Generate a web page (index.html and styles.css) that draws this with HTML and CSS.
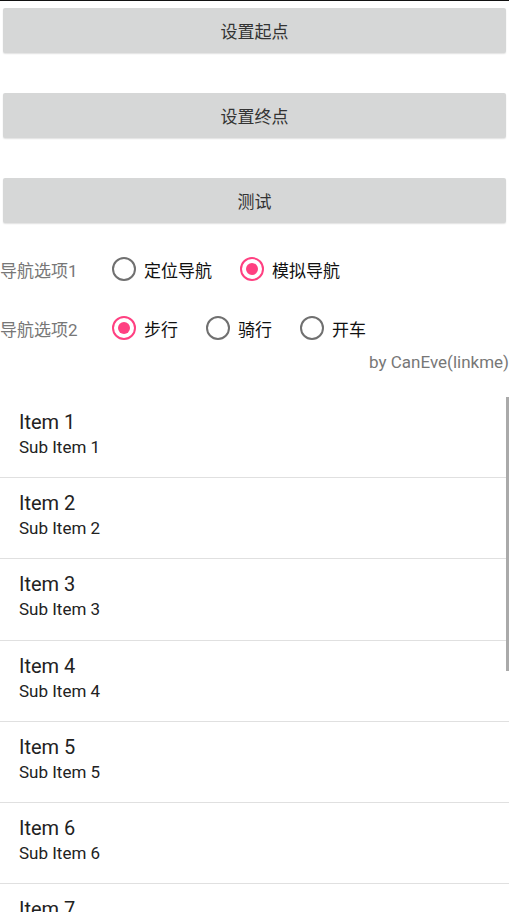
FILE: index.html
```html
<!DOCTYPE html>
<html lang="zh-CN">
<head>
  <meta charset="UTF-8">
  <meta name="viewport" content="width=device-width, initial-scale=1.0">
  <title>导航测试</title>
  <link rel="stylesheet" href="styles.css">
</head>
<body>
  <div class="top-line"></div>

  <div class="buttons">
    <button class="btn">设置起点</button>
    <button class="btn">设置终点</button>
    <button class="btn">测试</button>
  </div>

  <div class="options">
    <div class="option-row">
      <span class="option-label">导航选项1</span>
      <label class="radio"><span class="dot"></span><span>定位导航</span></label>
      <label class="radio checked"><span class="dot"></span><span>模拟导航</span></label>
    </div>
    <div class="option-row">
      <span class="option-label">导航选项2</span>
      <label class="radio checked"><span class="dot"></span><span>步行</span></label>
      <label class="radio"><span class="dot"></span><span>骑行</span></label>
      <label class="radio"><span class="dot"></span><span>开车</span></label>
    </div>
  </div>

  <div class="credit">by CanEve(linkme)</div>

  <div class="list-wrap">
    <ul class="list">
      <li class="list-item"><div class="title">Item 1</div><div class="sub">Sub Item 1</div></li>
      <li class="list-item"><div class="title">Item 2</div><div class="sub">Sub Item 2</div></li>
      <li class="list-item"><div class="title">Item 3</div><div class="sub">Sub Item 3</div></li>
      <li class="list-item"><div class="title">Item 4</div><div class="sub">Sub Item 4</div></li>
      <li class="list-item"><div class="title">Item 5</div><div class="sub">Sub Item 5</div></li>
      <li class="list-item"><div class="title">Item 6</div><div class="sub">Sub Item 6</div></li>
      <li class="list-item"><div class="title">Item 7</div><div class="sub">Sub Item 7</div></li>
    </ul>
    <div class="scrollbar"></div>
  </div>
</body>
</html>
```

FILE: styles.css
```css
* {
  box-sizing: border-box;
  font-family: Roboto, "Noto Sans CJK SC", sans-serif;
}
html, body {
  height: 100%;
}
body {
  margin: 0;
  background: white;
  overflow: hidden;
}
.top-line {
  height: 1px;
  background: #111;
}
.buttons {
  display: flex;
  flex-direction: column;
  gap: 40px;
  padding: 7px 3px 0;
}
.btn {
  height: 45px;
  border: none;
  border-radius: 2px;
  background: #d6d7d7;
  box-shadow: 0 1px 1.5px rgba(0, 0, 0, 0.12);
  color: #333;
  font-size: 17px;
  padding: 0;
}
.options {
  display: flex;
  flex-direction: column;
  gap: 11px;
  margin-top: 22px;
}
.option-row {
  display: flex;
  align-items: center;
  height: 48px;
}
.option-label {
  width: 112px;
  color: #777;
  font-size: 17px;
}
.radio {
  display: flex;
  align-items: center;
  gap: 8px;
  margin-right: 28px;
  font-size: 17px;
  color: #111;
}
.dot {
  width: 24px;
  height: 24px;
  border: 2px solid #707070;
  border-radius: 50%;
  display: flex;
  align-items: center;
  justify-content: center;
}
.radio.checked .dot {
  border-color: #ff4081;
}
.radio.checked .dot::after {
  content: "";
  width: 12px;
  height: 12px;
  border-radius: 50%;
  background: #ff4081;
}
.credit {
  text-align: right;
  line-height: 20px;
  font-size: 17px;
  color: #777;
  white-space: nowrap;
}
.list-wrap {
  position: relative;
  margin-top: 25px;
}
.list {
  list-style: none;
  margin: 0;
  padding: 0;
}
.list-item {
  height: 81.2px;
  padding: 13px 19px 0;
  border-bottom: 1px solid #e0e0e0;
}
.title {
  font-size: 20px;
  line-height: 24px;
  color: #222;
}
.sub {
  margin-top: 3px;
  font-size: 17px;
  line-height: 20px;
  color: #222;
}
.scrollbar {
  position: absolute;
  top: 0;
  right: 0;
  width: 3px;
  height: 274px;
  background: #aaa;
}
```
